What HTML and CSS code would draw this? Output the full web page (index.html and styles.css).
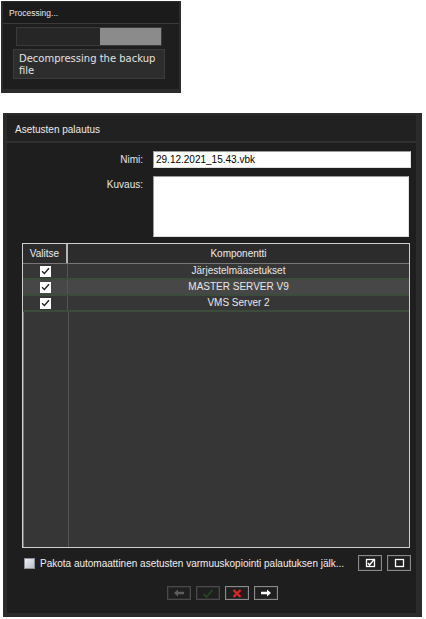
FILE: index.html
```html
<!DOCTYPE html>
<html lang="fi">
  <head>
    <meta charset="UTF-8" />
    <title>Asetusten palautus</title>
    <meta name="viewport" content="width=device-width, initial-scale=1.0" />
    <link rel="stylesheet" href="styles.css">
  </head>
  <body>
    <div class="progress-dialog">
      <div class="progress-inner">
        <div class="progress-title">Processing...</div>
        <div class="progress-body">
          <div class="bar"><div class="bar-done"></div></div>
          <div class="status">Decompressing the backup file</div>
        </div>
      </div>
    </div>

    <div class="restore-dialog">
      <div class="restore-inner">
        <div class="restore-title">Asetusten palautus</div>
        <div class="restore-body">
          <div class="field-row">
            <label for="name">Nimi:</label>
            <input type="text" id="name" value="29.12.2021_15.43.vbk">
          </div>
          <div class="field-row field-row-tall">
            <label for="desc">Kuvaus:</label>
            <textarea id="desc"></textarea>
          </div>

          <div class="grid">
            <div class="grid-head">
              <div class="cell cell-check">Valitse</div>
              <div class="cell">Komponentti</div>
            </div>
            <div class="grid-row">
              <div class="cell cell-check"><span class="tick"><svg width="9" height="8" viewBox="0 0 9 8"><path d="M1 4.2 L3.4 6.5 L8 1.3" fill="none" stroke="#222" stroke-width="1.4"/></svg></span></div>
              <div class="cell">Järjestelmäasetukset</div>
            </div>
            <div class="grid-row selected">
              <div class="cell cell-check"><span class="tick"><svg width="9" height="8" viewBox="0 0 9 8"><path d="M1 4.2 L3.4 6.5 L8 1.3" fill="none" stroke="#222" stroke-width="1.4"/></svg></span></div>
              <div class="cell">MASTER SERVER V9</div>
            </div>
            <div class="grid-row">
              <div class="cell cell-check"><span class="tick"><svg width="9" height="8" viewBox="0 0 9 8"><path d="M1 4.2 L3.4 6.5 L8 1.3" fill="none" stroke="#222" stroke-width="1.4"/></svg></span></div>
              <div class="cell">VMS Server 2</div>
            </div>
          </div>

          <div class="option-row">
            <span class="option-box"></span>
            <span class="option-text">Pakota automaattinen asetusten varmuuskopiointi palautuksen jälk...</span>
            <button class="btn btn-small" title="Valitse kaikki">
              <svg width="11" height="10" viewBox="0 0 11 10"><rect x="1.5" y="1.5" width="8" height="7" fill="none" stroke="#fff" stroke-width="1.3"/><path d="M3 5 L4.5 7 L9.5 1" fill="none" stroke="#fff" stroke-width="1.4"/></svg>
            </button>
            <button class="btn btn-small" title="Poista valinnat">
              <svg width="11" height="10" viewBox="0 0 11 10"><rect x="1.5" y="1.5" width="8" height="7" fill="none" stroke="#fff" stroke-width="1.3"/></svg>
            </button>
          </div>

          <div class="nav-row">
            <button class="btn btn-nav" disabled>
              <svg width="12" height="8" viewBox="0 0 12 8"><path d="M1 4 L5 0.5 V2.8 H11 V5.2 H5 V7.5 Z" fill="#5e5e5e"/></svg>
            </button>
            <button class="btn btn-nav" disabled>
              <svg width="12" height="9" viewBox="0 0 12 9"><path d="M1.5 5 L4.5 8 L10.5 1" fill="none" stroke="#264626" stroke-width="1.8"/></svg>
            </button>
            <button class="btn btn-nav">
              <svg width="10" height="9" viewBox="0 0 10 9"><path d="M1.5 1 L8.5 8 M8.5 1 L1.5 8" stroke="#e52222" stroke-width="2.4"/></svg>
            </button>
            <button class="btn btn-nav">
              <svg width="12" height="8" viewBox="0 0 12 8"><path d="M11 4 L7 0.5 V2.8 H1 V5.2 H7 V7.5 Z" fill="#fff"/></svg>
            </button>
          </div>
        </div>
      </div>
    </div>
  </body>
</html>
```

FILE: styles.css
```css
* {
  box-sizing: border-box;
}
body {
  margin: 0;
  background: #fff;
  font-family: 'Liberation Sans', Arial, sans-serif;
  font-size: 10px;
  color: #e6e6e6;
}

/* small progress window */
.progress-dialog {
  width: 180px;
  height: 92px;
  margin: 1px 0 0 1px;
  padding: 1px 2px 4px 2px;
  background: #2c2c2c;
}
.progress-inner {
  height: 100%;
  background: #1e1e1e;
}
.progress-title {
  height: 22px;
  line-height: 22px;
  padding-left: 6px;
  font-size: 8.5px;
  color: #e8e8e8;
  background: #1b1b1b;
  border-bottom: 1px solid #3a3a3a;
}
.progress-body {
  padding: 3px 0 0 12px;
}
.bar {
  display: flex;
  justify-content: flex-end;
  width: 146px;
  height: 19px;
  margin-left: 1px;
  background: #262626;
  border: 1px solid #3a3a3a;
}
.bar-done {
  width: 61px;
  background: #8b8b8b;
}
.status {
  width: 152px;
  height: 30px;
  margin: 3px 0 0 -2px;
  padding: 3px 0 0 5px;
  background: #2d2d2d;
  border: 1px solid #3c3c3c;
  font-family: 'DejaVu Sans', Verdana, sans-serif;
  font-size: 10px;
  line-height: 12px;
  color: #e2e2e2;
}

/* restore window */
.restore-dialog {
  width: 419px;
  height: 504px;
  margin: 20px 0 0 3px;
  padding: 2px 6px 4px 4px;
  background: #2b2b2b;
}
.restore-inner {
  height: 100%;
  background: #1e1e1e;
  display: flex;
  flex-direction: column;
}
.restore-title {
  height: 28px;
  line-height: 30px;
  padding-left: 8px;
  font-size: 10px;
  color: #ececec;
  background: #212121;
  border-bottom: 2px solid #303030;
}
.restore-body {
  flex: 1;
  padding: 8px 5px 0 0;
}
.field-row {
  display: flex;
  gap: 10px;
  height: 17px;
}
.field-row label {
  width: 136px;
  text-align: right;
  line-height: 17px;
  color: #e6e6e6;
}
.field-row input,
.field-row textarea {
  width: 258px;
  margin: 0;
  padding: 0 2px;
  border: 1px solid #9a9a9a;
  border-right-color: #e0e0e0;
  border-bottom-color: #e0e0e0;
  background: #fff;
  font-family: 'Liberation Sans', Arial, sans-serif;
  font-size: 10px;
  color: #000;
  resize: none;
}
.field-row-tall {
  height: 61px;
  margin-top: 8px;
}
.field-row-tall label {
  line-height: 18px;
}
.field-row-tall textarea {
  width: 256px;
}

/* component list */
.grid {
  height: 305px;
  margin: 6px 0 0 15px;
  width: 388px;
  border: 1px solid #cfcfcf;
  box-shadow: inset 1px 0 0 #7a7a7a;
  background: linear-gradient(90deg, transparent 45px, #555 45px, #555 46px, transparent 46px), #363636;
}
.grid-head,
.grid-row {
  display: grid;
  grid-template-columns: 45px 1fr;
}
.grid-head {
  height: 20px;
  background: #2c2c2c;
  border-bottom: 1px solid #777;
}
.grid-head .cell {
  line-height: 19px;
  color: #ececec;
}
.grid-head .cell-check {
  border-right: 2px solid #b5b5b5;
}
.cell {
  text-align: center;
  color: #e8e8e8;
}
.grid-row {
  height: 16px;
  border-bottom: 2px solid #3c4c3c;
  background: #363636;
}
.grid-row .cell {
  line-height: 14px;
}
.grid-row .cell-check {
  border-right: 1px solid #555;
  display: flex;
  align-items: center;
  justify-content: center;
}
.grid-row.selected {
  background: #474747;
}
.tick {
  display: flex;
  align-items: center;
  justify-content: center;
  width: 11px;
  height: 11px;
  background: #fff;
}

/* bottom controls */
.option-row {
  display: flex;
  align-items: center;
  height: 16px;
  margin-top: 7px;
  padding-left: 17px;
}
.option-box {
  flex: none;
  width: 11px;
  height: 11px;
  background: linear-gradient(135deg, #eef0f4, #b9bec8);
  border: 1px solid #8c9099;
}
.option-text {
  flex: 1;
  min-width: 0;
  margin-left: 5px;
  white-space: nowrap;
  overflow: hidden;
  color: #f0f0f0;
}
.btn {
  flex: none;
  display: flex;
  align-items: center;
  justify-content: center;
  padding: 0;
  background: #1f1f1f;
  border: 1px solid #8a8a8a;
  box-shadow: inset 0 0 0 1px #2c2c2c;
  cursor: pointer;
}
.btn:disabled {
  border-color: #4a4a4a;
  cursor: default;
}
.btn-small {
  width: 24px;
  height: 16px;
  margin-left: 5px;
}
.option-text + .btn-small {
  margin-left: 8px;
}
.nav-row {
  display: flex;
  gap: 5px;
  margin-top: 15px;
  padding-left: 160px;
}
.btn-nav {
  width: 24px;
  height: 14px;
}
```
